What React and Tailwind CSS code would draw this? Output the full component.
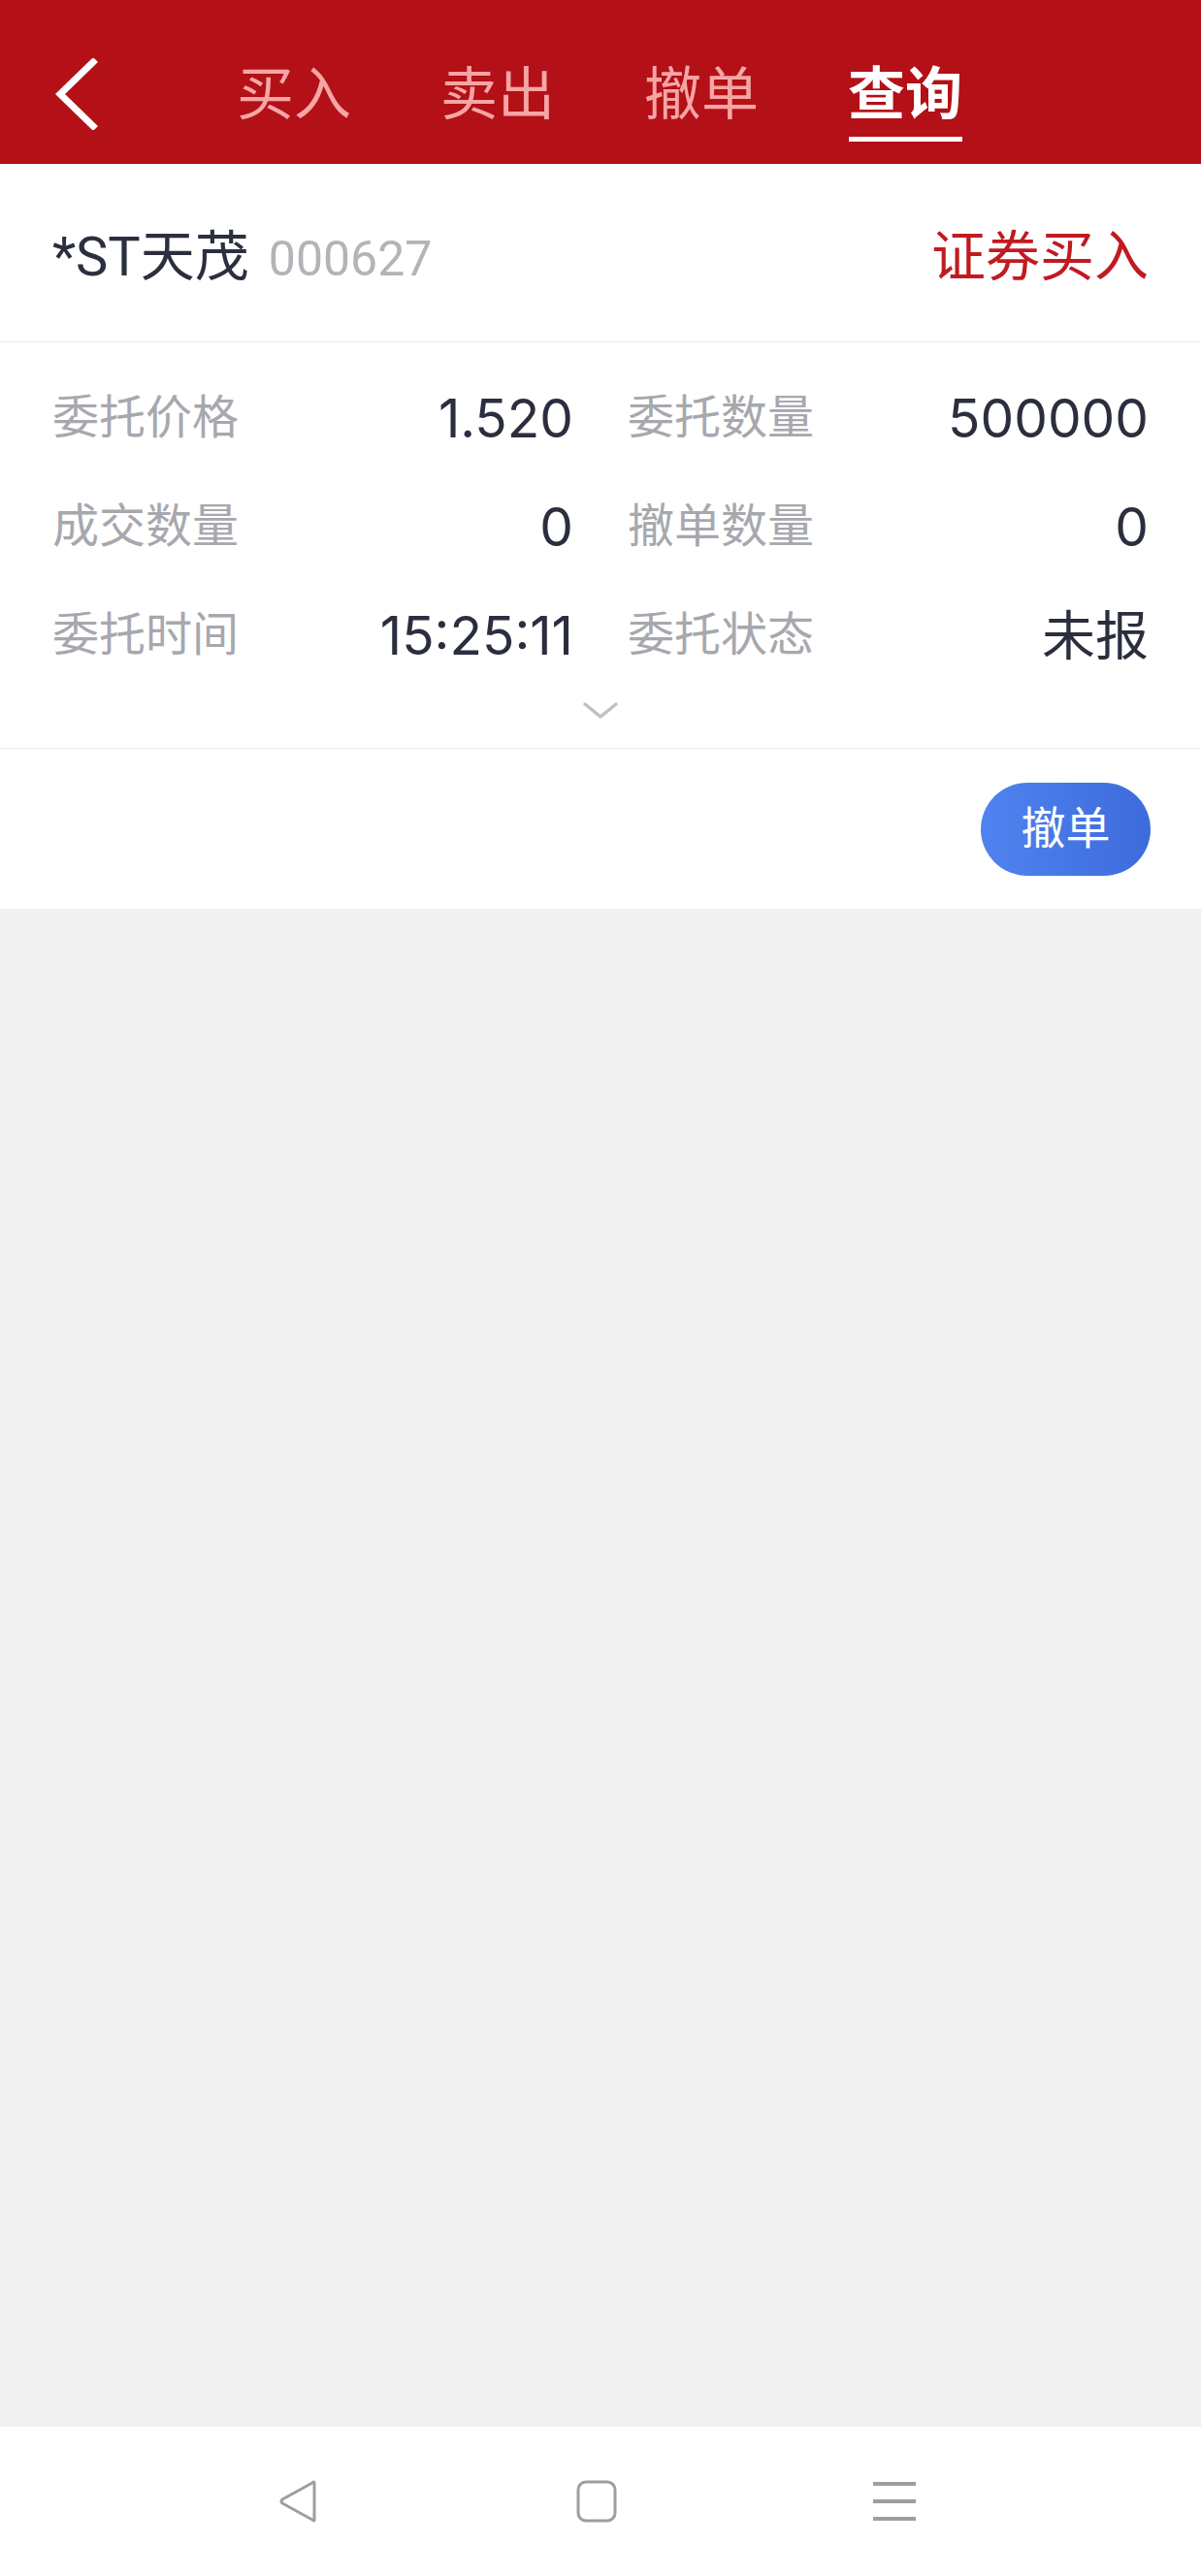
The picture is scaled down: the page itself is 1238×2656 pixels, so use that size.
import React from 'react';

const TABS = ['买入', '卖出', '撤单', '查询'];

const DETAILS = [
    [['委托价格', '1.520'], ['委托数量', '500000']],
    [['成交数量', '0'], ['撤单数量', '0']],
    [['委托时间', '15:25:11'], ['委托状态', '未报']],
];

const App = () => {
    const active = '查询';

    return (
        <div className="h-[2656px] flex flex-col bg-[#f1f1f1] font-['Roboto','Noto_Sans_CJK_SC',sans-serif]">
            {/* Header */}
            <div className="h-[169px] bg-[#b31017] flex items-start px-[56px] shrink-0">
                <button className="mt-[60px] w-[46px] h-[74px] flex items-center">
                    <svg width="46" height="74" viewBox="0 0 46 74">
                        <path d="M40 4 L6 37 L40 70" fill="none" stroke="#fff" strokeWidth="7" strokeLinecap="square" />
                    </svg>
                </button>
                <div className="flex ml-[141px] gap-[90px] pt-[67px]">
                    {TABS.map(tab => (
                        <div key={tab} className="w-[120px] flex flex-col items-center">
                            <span
                                className={`text-[59px] leading-[62px] ${tab === active ? 'text-white font-bold' : 'text-[#f6a5a5]'}`}
                            >
                                {tab}
                            </span>
                            <div className={`mt-[12px] h-[5px] w-[117px] ${tab === active ? 'bg-white' : 'bg-transparent'}`} />
                        </div>
                    ))}
                </div>
            </div>

            {/* Stock row */}
            <div className="h-[184px] bg-white flex items-center justify-between px-[54px] pt-[8px] border-b border-[#ebebeb] shrink-0">
                <div className="flex items-baseline">
                    <span className="text-[56px] text-[#2b2f3f]">*ST天茂</span>
                    <span className="text-[50px] text-[#b3b3b8] ml-[20px]">000627</span>
                </div>
                <span className="text-[56px] text-[#c01b20]">证券买入</span>
            </div>

            {/* Details */}
            <div className="bg-white pt-[22px] border-b border-[#ebebeb] shrink-0">
                <div className="grid grid-cols-2 gap-x-[56px] px-[54px]">
                    {DETAILS.flat().map(([label, value]) => (
                        <div key={label} className="h-[112px] flex items-center justify-between">
                            <span className="text-[48px] text-[#a7a8ae]">{label}</span>
                            <span className="text-[55px] text-[#2a2e3e] font-['Inter','Noto_Sans_CJK_SC',sans-serif]">{value}</span>
                        </div>
                    ))}
                </div>
                <div className="h-[60px] flex justify-center pt-[12px]">
                    <svg width="38" height="20" viewBox="0 0 38 20">
                        <path d="M3 3 L19 16 L35 3" fill="none" stroke="#bfc0c5" strokeWidth="3.5" strokeLinecap="round" strokeLinejoin="round" />
                    </svg>
                </div>
            </div>

            {/* Action row */}
            <div className="h-[165px] bg-white flex items-center justify-end pr-[52px] shrink-0">
                <button className="w-[175px] h-[96px] rounded-full bg-gradient-to-r from-[#5083f0] to-[#3d6bdc] text-white text-[46px]">
                    撤单
                </button>
            </div>

            <div className="flex-1" />

            {/* System nav bar */}
            <div className="h-[154px] bg-white flex items-start pt-[55px] shrink-0">
                <div className="flex w-full">
                    <div className="ml-[286px] w-[42px] h-[44px] flex items-center justify-center">
                        <svg width="42" height="44" viewBox="0 0 42 44">
                            <path d="M38 3 L38 41 Q38 43 36 41 L5 24 Q3 22 5 20 L36 3 Q38 1 38 3 Z" fill="none" stroke="#9e9e9e" strokeWidth="3" strokeLinejoin="round" />
                        </svg>
                    </div>
                    <div className="ml-[266px] w-[42px] h-[44px] flex items-center justify-center">
                        <svg width="42" height="44" viewBox="0 0 42 44">
                            <rect x="2" y="2" width="38" height="40" rx="8" fill="none" stroke="#9e9e9e" strokeWidth="3" />
                        </svg>
                    </div>
                    <div className="ml-[264px] w-[44px] h-[44px] flex flex-col justify-between py-[2px]">
                        <div className="h-[4px] bg-[#9e9e9e]" />
                        <div className="h-[4px] bg-[#9e9e9e]" />
                        <div className="h-[4px] bg-[#9e9e9e]" />
                    </div>
                </div>
            </div>
        </div>
    );
};

export default App;
